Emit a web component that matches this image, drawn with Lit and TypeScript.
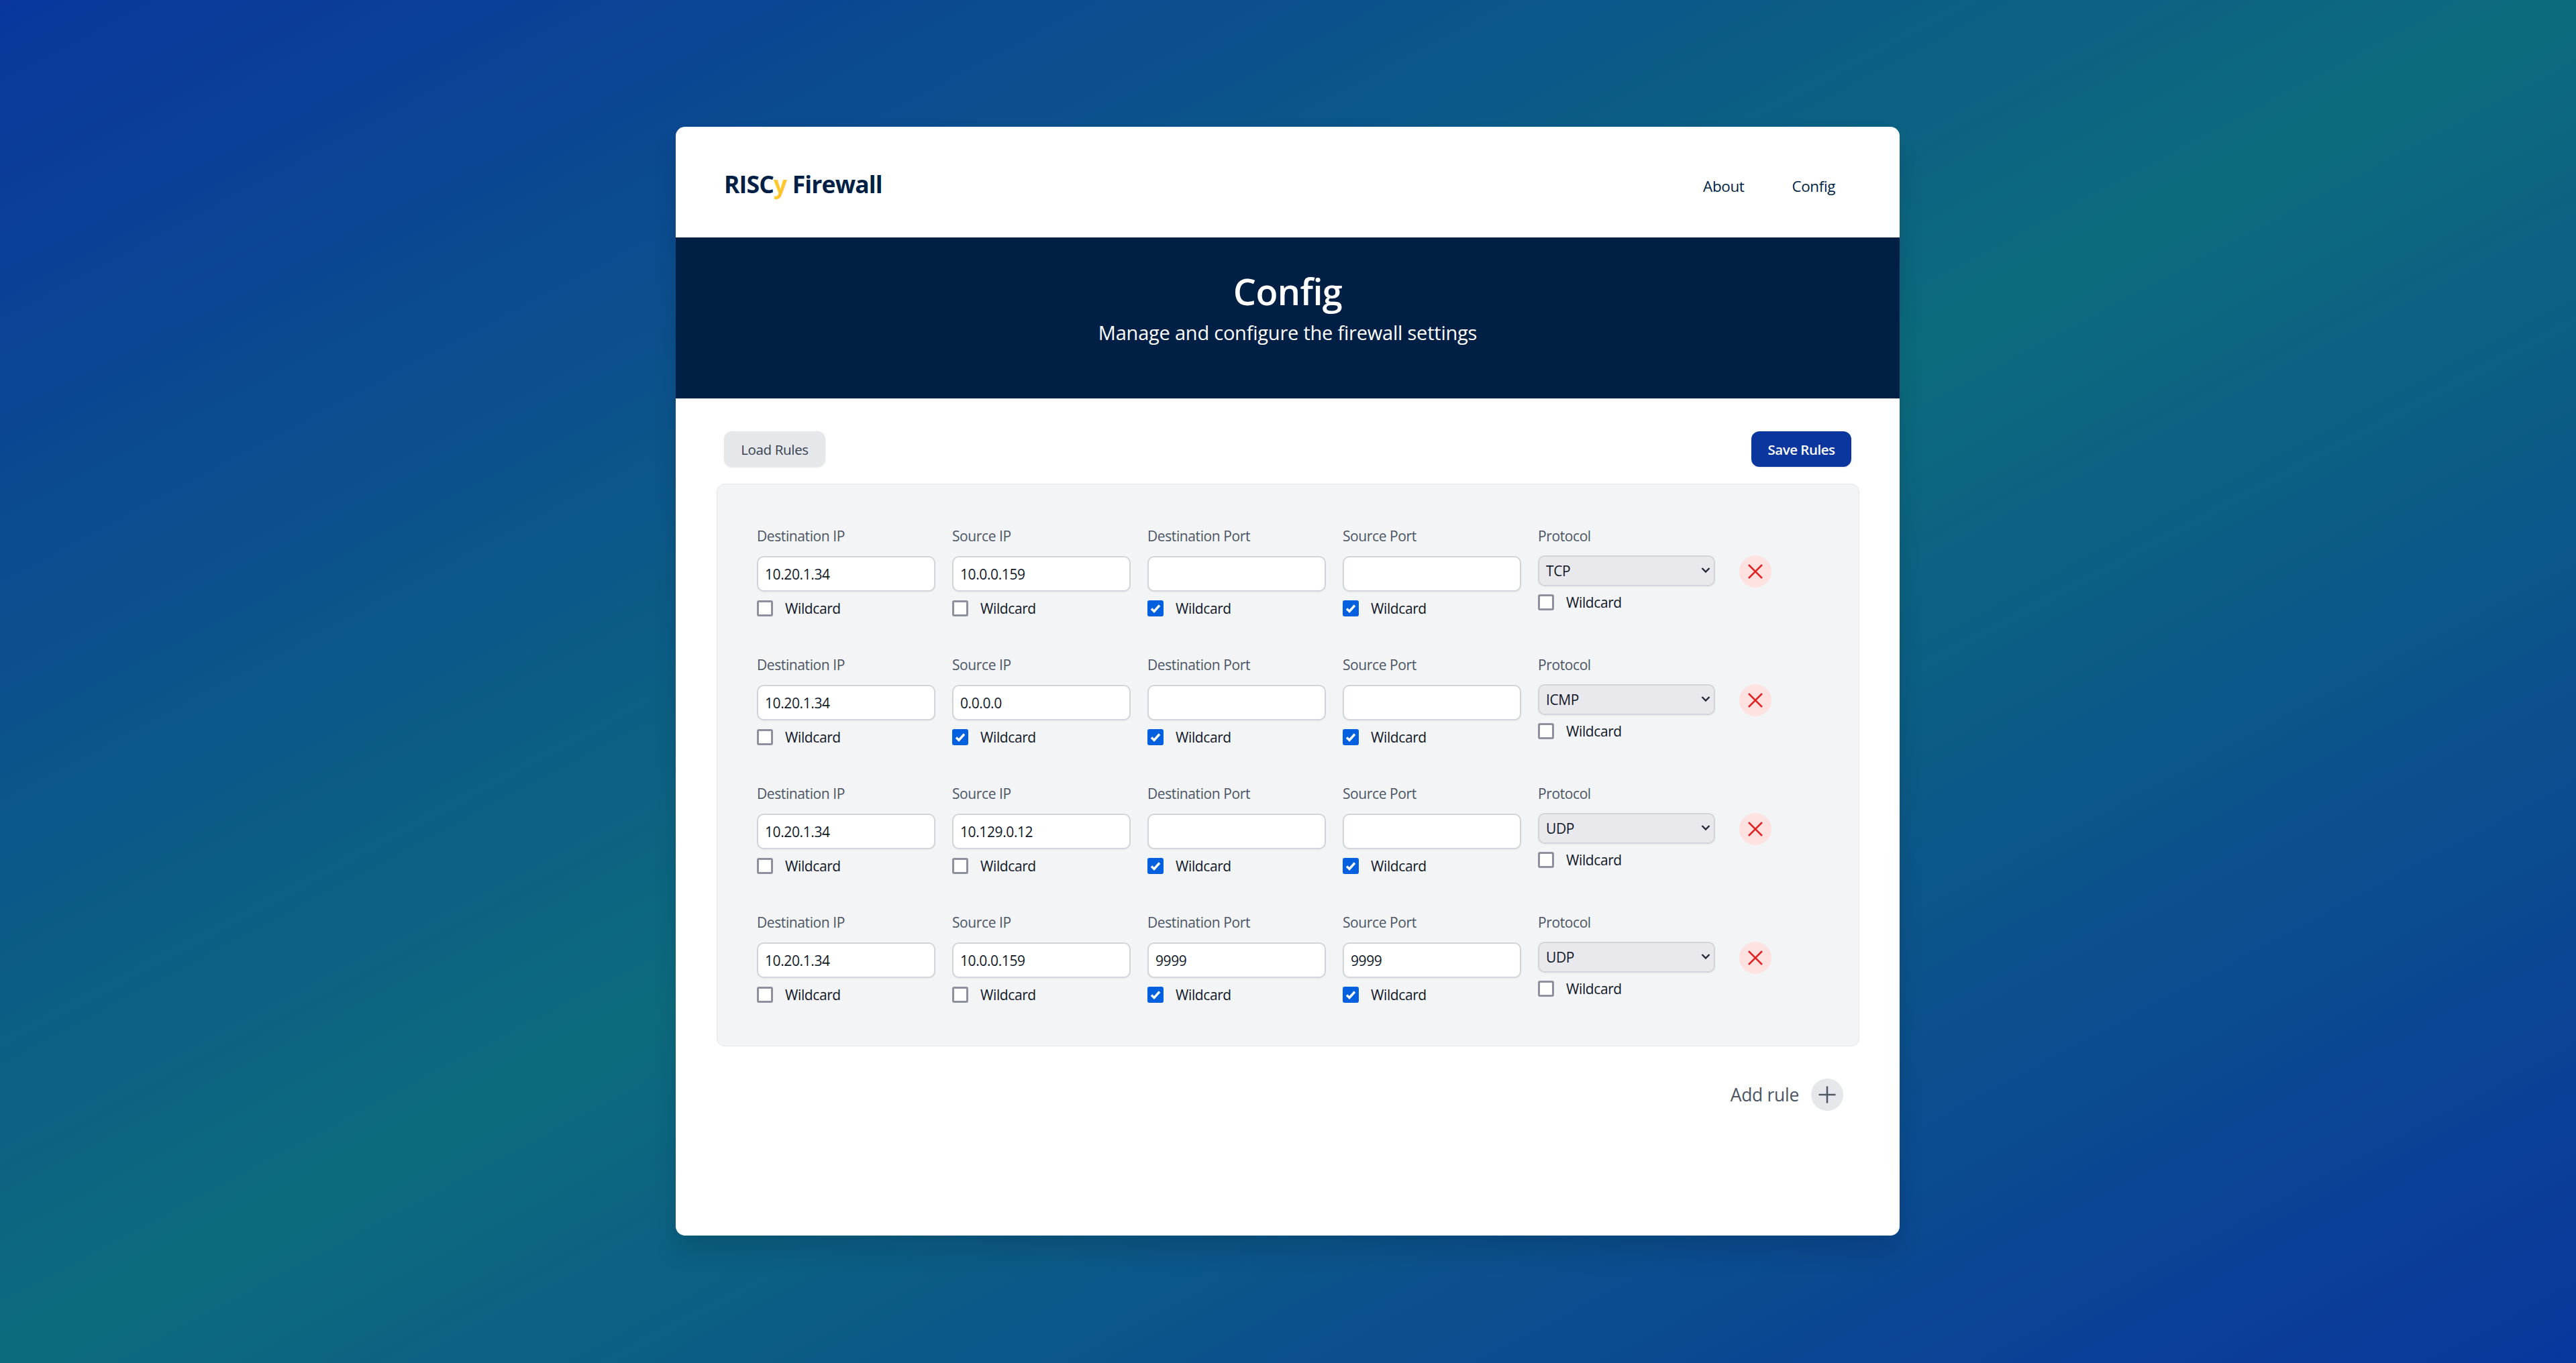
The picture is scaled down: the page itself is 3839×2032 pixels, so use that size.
import { css, html, LitElement, svg } from "lit";
import { customElement } from "lit/decorators.js";

interface Rule {
  destIp: string;
  srcIp: string;
  destPort: string;
  srcPort: string;
  protocol: string;
  wild: boolean[]; // destIp, srcIp, destPort, srcPort
}

const RULES: Rule[] = [
  { destIp: "10.20.1.34", srcIp: "10.0.0.159", destPort: "", srcPort: "", protocol: "TCP", wild: [false, false, true, true] },
  { destIp: "10.20.1.34", srcIp: "0.0.0.0", destPort: "", srcPort: "", protocol: "ICMP", wild: [false, true, true, true] },
  { destIp: "10.20.1.34", srcIp: "10.129.0.12", destPort: "", srcPort: "", protocol: "UDP", wild: [false, false, true, true] },
  { destIp: "10.20.1.34", srcIp: "10.0.0.159", destPort: "9999", srcPort: "9999", protocol: "UDP", wild: [false, false, true, true] },
];

const PROTOCOLS = ["TCP", "UDP", "ICMP"];

const xIcon = svg`<path d="M6 18 18 6M6 6l12 12" />`;
const plusIcon = svg`<path d="M12 4.5v15m7.5-7.5h-15" />`;

@customElement("app-root")
export class AppRoot extends LitElement {
  static styles = css`
    :host {
      display: flex;
      align-items: center;
      justify-content: center;
      width: 100%;
      height: 2032px;
      box-sizing: border-box;
      padding: 0 1px 1px 0;
      background: linear-gradient(to bottom right, #0a369d, #0c6b7d, #0a369d);
      font-family: "Open Sans", "Noto Sans", sans-serif;
      color: #001f3f;
    }

    .card {
      width: 1824px;
      height: 1653px;
      background: #fff;
      border-radius: 14px;
      overflow: hidden;
      box-shadow: 0 24px 36px rgba(0, 0, 0, 0.12);
    }

    .nav {
      height: 165px;
      box-sizing: border-box;
      display: flex;
      align-items: center;
      justify-content: space-between;
      padding: 0 96px 0 72px;
    }

    .brand {
      font-size: 35.5px;
      font-weight: 700;
      letter-spacing: -0.85px;
      padding-top: 5px;
      color: #001f44;
    }

    .brand span {
      color: #ffc72c;
    }

    .links {
      display: flex;
      gap: 71px;
      font-size: 22.5px;
      letter-spacing: -0.4px;
      padding-top: 11px;
      color: #001f44;
    }

    .hero {
      height: 240px;
      box-sizing: border-box;
      padding-top: 44px;
      background: #001f44;
      color: #fff;
      text-align: center;
    }

    .hero h1 {
      margin: 0;
      font-size: 54px;
      font-weight: 600;
      line-height: 72px;
      letter-spacing: -0.6px;
    }

    .hero p {
      margin: 4px 0 0;
      font-size: 29px;
      line-height: 44px;
      letter-spacing: -0.22px;
    }

    .toolbar {
      display: flex;
      justify-content: space-between;
      padding: 49px 72px 25px;
    }

    .btn {
      height: 53px;
      border: 0;
      border-radius: 12px;
      font-family: inherit;
      font-size: 20.5px;
      font-weight: 600;
      letter-spacing: -0.5px;
      box-shadow: 0 1px 3px rgba(0, 0, 0, 0.1);
    }

    .btn.load {
      width: 151px;
      background: #e5e7eb;
      color: #374151;
      font-weight: 500;
      letter-spacing: -0.35px;
    }

    .btn.save {
      width: 149px;
      background: #0a369d;
      color: #fff;
    }

    .panel {
      margin: 0 60px 0 61px;
      box-sizing: border-box;
      height: 839px;
      padding: 62px 0 0 59px;
      background: #f3f4f6;
      border: 1px solid #e5e7eb;
      border-radius: 12px;
      display: flex;
      flex-direction: column;
      gap: 58px;
    }

    .row {
      display: grid;
      grid-template-columns: 266px 266px 266px 266px 264px 48px;
      column-gap: 25px;
      height: 134px;
    }

    .field {
      display: flex;
      flex-direction: column;
      align-items: flex-start;
    }

    .name {
      height: 30px;
      line-height: 30px;
      margin-bottom: 15px;
      font-size: 21px;
      letter-spacing: -0.4px;
      color: #4b5563;
    }

    .protocol .name {
      margin-bottom: 14px;
    }

    input.text {
      width: 100%;
      height: 53px;
      box-sizing: border-box;
      padding: 0 0 0 10px;
      border: 2px solid #d1d5db;
      border-radius: 10px;
      background: #fff;
      font-family: inherit;
      font-size: 21px;
      letter-spacing: -0.4px;
      color: #111827;
      outline: none;
      box-shadow: 0 1px 2px rgba(0, 0, 0, 0.05);
    }

    .select-wrap {
      position: relative;
      width: 100%;
      height: 46px;
    }

    select {
      appearance: none;
      width: 100%;
      height: 100%;
      box-sizing: border-box;
      padding: 0 0 0 10px;
      border: 2px solid #d1d5db;
      border-radius: 10px;
      background: #e9e9ed;
      font-family: inherit;
      font-size: 21px;
      letter-spacing: -0.4px;
      color: #111827;
      box-shadow: 0 1px 2px rgba(0, 0, 0, 0.05);
    }

    .chevron {
      position: absolute;
      right: 7px;
      top: 17px;
      width: 14px;
      height: 10px;
      fill: none;
      stroke: #1f2937;
      stroke-width: 2.4;
      pointer-events: none;
    }

    .wild {
      display: flex;
      align-items: center;
      gap: 18px;
      margin-top: 13px;
      height: 24px;
      font-size: 21px;
      letter-spacing: -0.4px;
      color: #111827;
    }

    .protocol .wild {
      margin-top: 12px;
    }

    .box {
      appearance: none;
      margin: 0;
      width: 24px;
      height: 24px;
      box-sizing: border-box;
      border: 3px solid #8f8f9d;
      border-radius: 3px;
      background: #fff;
    }

    .box-wrap {
      position: relative;
      width: 24px;
      height: 24px;
    }

    .box:checked {
      border: 0;
      border-radius: 3px;
      background: #0060df;
    }

    .tick {
      position: absolute;
      inset: 0;
      width: 24px;
      height: 24px;
      fill: none;
      stroke: #fff;
      stroke-width: 3.4;
      pointer-events: none;
    }

    .icon-btn {
      width: 48px;
      height: 48px;
      padding: 0;
      border: 0;
      border-radius: 50%;
      display: flex;
      align-items: center;
      justify-content: center;
    }

    .icon-btn svg {
      width: 40px;
      height: 40px;
      fill: none;
      stroke: currentColor;
      stroke-width: 1.5;
    }

    .remove {
      margin-top: 44px;
      margin-left: 11px;
      background: #fee2e2;
      color: #dc2626;
    }

    .add-row {
      display: flex;
      justify-content: flex-end;
      align-items: center;
      gap: 18px;
      margin: 48px 84px 0 0;
      font-size: 26.5px;
      letter-spacing: -0.3px;
      color: #4b5563;
    }

    .add {
      background: #e5e7eb;
      color: #4b5563;
    }
  `;

  renderWild(checked: boolean) {
    return html`
      <label class="wild">
        <span class="box-wrap">
          <input class="box" type="checkbox" .checked=${checked} />
          ${checked
            ? html`<svg class="tick" viewBox="0 0 24 24"><path d="M6 12.5l4 4 8-9" /></svg>`
            : null}
        </span>
        Wildcard
      </label>
    `;
  }

  renderField(name: string, value: string, wild: boolean) {
    return html`
      <div class="field">
        <label class="name">${name}</label>
        <input class="text" type="text" .value=${value} />
        ${this.renderWild(wild)}
      </div>
    `;
  }

  renderRule(rule: Rule) {
    return html`
      <div class="row">
        ${this.renderField("Destination IP", rule.destIp, rule.wild[0])}
        ${this.renderField("Source IP", rule.srcIp, rule.wild[1])}
        ${this.renderField("Destination Port", rule.destPort, rule.wild[2])}
        ${this.renderField("Source Port", rule.srcPort, rule.wild[3])}
        <div class="field protocol">
          <label class="name">Protocol</label>
          <div class="select-wrap">
            <select .value=${rule.protocol}>
              ${PROTOCOLS.map(
                (p) => html`<option ?selected=${p === rule.protocol}>${p}</option>`
              )}
            </select>
            <svg class="chevron" viewBox="0 0 14 10"><path d="M1.5 2l5.5 5.5L12.5 2" /></svg>
          </div>
          ${this.renderWild(false)}
        </div>
        <button class="icon-btn remove" aria-label="Remove rule">
          <svg viewBox="0 0 24 24">${xIcon}</svg>
        </button>
      </div>
    `;
  }

  render() {
    return html`
      <div class="card">
        <nav class="nav">
          <div class="brand">RISC<span>y</span> Firewall</div>
          <div class="links"><a>About</a><a>Config</a></div>
        </nav>
        <header class="hero">
          <h1>Config</h1>
          <p>Manage and configure the firewall settings</p>
        </header>
        <div class="toolbar">
          <button class="btn load">Load Rules</button>
          <button class="btn save">Save Rules</button>
        </div>
        <section class="panel">${RULES.map((r) => this.renderRule(r))}</section>
        <div class="add-row">
          Add rule
          <button class="icon-btn add" aria-label="Add rule">
            <svg viewBox="0 0 24 24">${plusIcon}</svg>
          </button>
        </div>
      </div>
    `;
  }
}

declare global {
  interface HTMLElementTagNameMap {
    "app-root": AppRoot;
  }
}
